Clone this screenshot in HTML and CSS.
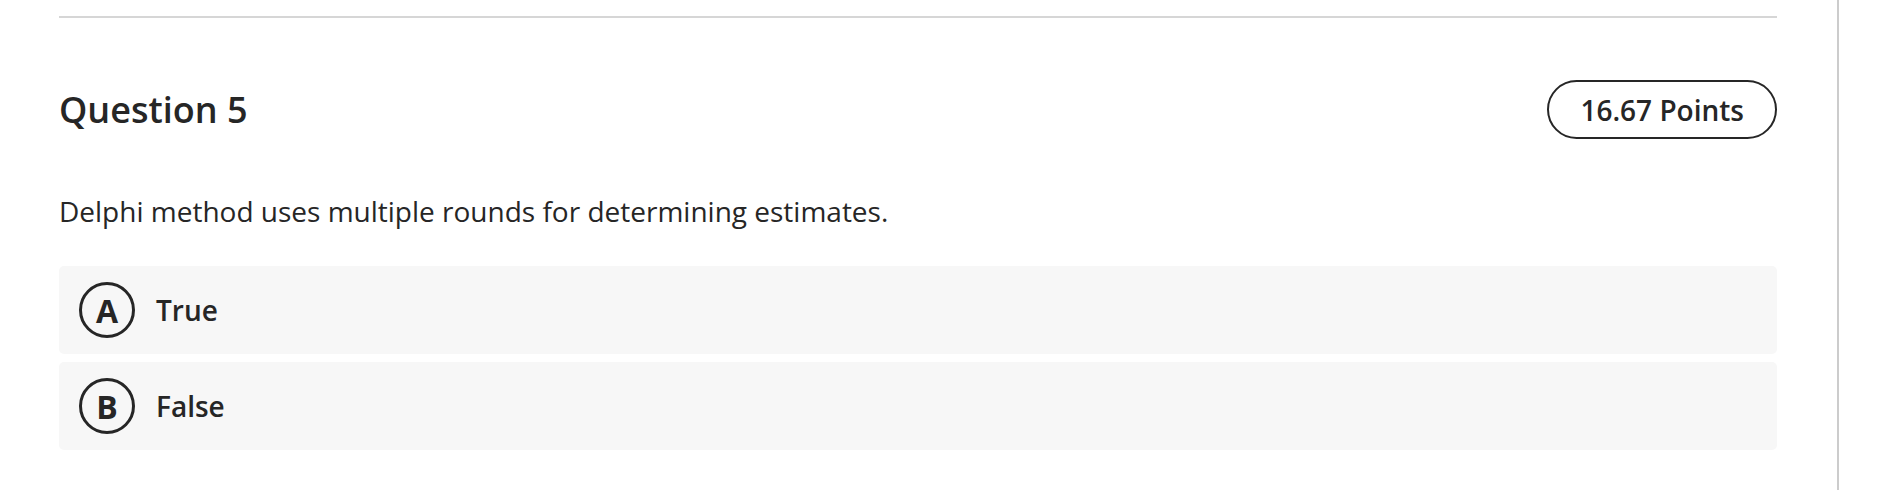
FILE: index.html
```html
<!DOCTYPE html>
<html lang="en">
<head>
    <meta charset="UTF-8">
    <meta name="viewport" content="width=device-width, initial-scale=1.0">
    <title>Question 5</title>
    <link rel="stylesheet" href="styles.css">
</head>
<body>
    <div class="page">
        <div class="main">
            <!-- Question block -->
            <section class="question">
                <div class="question-head">
                    <h2>Question 5</h2>
                    <span class="points">16.67 Points</span>
                </div>
                <p class="prompt">Delphi method uses multiple rounds for determining estimates.</p>
                <ul class="options">
                    <li class="option">
                        <span class="letter">A</span>
                        <span class="label">True</span>
                    </li>
                    <li class="option">
                        <span class="letter">B</span>
                        <span class="label">False</span>
                    </li>
                </ul>
            </section>
        </div>
    </div>
</body>
</html>
```

FILE: styles.css
```css
body {
    margin: 0;
    font-family: 'Open Sans', 'Noto Sans', sans-serif;
    color: #262626;
    background-color: #fff;
}
.page {
    display: flex;
    height: 490px;
    overflow: hidden;
}
.main {
    width: 1718px;
    padding: 0 60px 0 59px;
    border-right: 2px solid #cccccc;
}
.question {
    margin-top: 16px;
    border-top: 2px solid #d6d6d6;
    padding-top: 62px;
}
.question-head {
    display: flex;
    justify-content: space-between;
    align-items: center;
}
.question-head h2 {
    margin: 0;
    font-size: 36px;
    font-weight: 600;
    line-height: 1.2;
}
.points {
    display: inline-flex;
    align-items: center;
    height: 55px;
    padding: 0 31px;
    border: 2px solid #262626;
    border-radius: 30px;
    font-size: 28px;
    font-weight: 600;
}
.prompt {
    margin: 53px 0 36px;
    font-size: 28px;
    line-height: 38px;
}
.options {
    list-style: none;
    margin: 0;
    padding: 0;
    display: flex;
    flex-direction: column;
    gap: 8px;
}
.option {
    display: flex;
    align-items: center;
    gap: 21px;
    height: 88px;
    padding: 0 20px;
    background-color: #f7f7f7;
    border-radius: 5px;
}
.letter {
    display: flex;
    align-items: center;
    justify-content: center;
    width: 50px;
    height: 50px;
    border: 3px solid #262626;
    border-radius: 50%;
    font-size: 32px;
    font-weight: 700;
}
.label {
    font-size: 28px;
    font-weight: 600;
}
```
